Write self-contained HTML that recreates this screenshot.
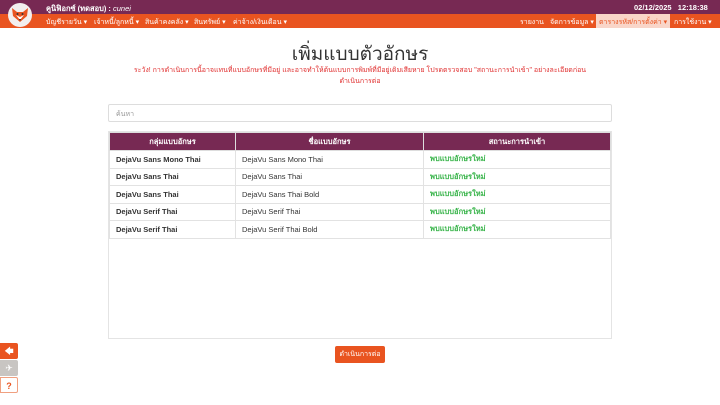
<!DOCTYPE html>
<html><head><meta charset="utf-8"><style>
*{box-sizing:border-box;margin:0;padding:0}
body{width:720px;height:405px;background:#fff;font-family:"Liberation Sans","Noto Sans CJK SC",sans-serif;position:relative;overflow:hidden;color:#333}
.top{position:absolute;left:0;top:0;width:720px;height:14px;background:#772953;color:#fff;font-size:7.5px}
.nav{position:absolute;left:0;top:14px;width:720px;height:14px;background:#e95420;color:#fff;font-size:7px}
.logo{position:absolute;left:8px;top:3px;width:24px;height:24px;border-radius:50%;background:#f2eeee;z-index:2;display:flex;align-items:center;justify-content:center}
.abs{position:absolute;white-space:nowrap}
h1{position:absolute;top:39px;left:0;width:720px;text-align:center;font-size:19px;font-weight:normal;color:#333}
.warn{position:absolute;top:65px;left:120px;width:480px;text-align:center;font-size:7px;color:#e03030;line-height:11px}
.search{position:absolute;left:108px;top:104px;width:504px;height:18px;border:1px solid #ddd;border-radius:2px;font-size:7px;color:#999;padding:4px 7px}
.box{position:absolute;left:108px;top:131px;width:504px;height:208px;border:1px solid #e4e4e4}
table{border-collapse:collapse;width:502px;font-size:7.5px}
th{background:#772953;color:#fff;height:18px;border:1px solid #ddd;font-weight:bold}
td{height:17.5px;border:1px solid #e2e2e2;padding-left:6px}
td.b{font-weight:bold}
td.g{color:#38b44a;font-weight:bold}
.btn{position:absolute;left:335px;top:346px;width:50px;height:17px;background:#e95420;border-radius:2px;color:#fff;font-size:7px;text-align:center;line-height:17px}
.sb{position:absolute;left:0;width:18px;height:16px;font-size:9px;text-align:center;line-height:16px;border-radius:0 2px 2px 0}
</style></head><body>
<div class="top">
<span class="abs" style="left:46px;top:3px;font-weight:bold">คูนิฟิอกซ์ (ทดสอบ) : <i style="font-weight:normal">cunei</i></span>
<span class="abs" style="left:634px;top:3px;font-weight:bold">02/12/2025 &nbsp;&nbsp;12:18:38</span>
</div>
<div class="nav">
<span class="abs" style="left:46px;top:3px">บัญชีรายวัน ▾</span>
<span class="abs" style="left:94px;top:3px">เจ้าหนี้/ลูกหนี้ ▾</span>
<span class="abs" style="left:145px;top:3px">สินค้าคงคลัง ▾</span>
<span class="abs" style="left:194px;top:3px">สินทรัพย์ ▾</span>
<span class="abs" style="left:233px;top:3px">ค่าจ้าง/เงินเดือน ▾</span>
<span class="abs" style="left:520px;top:3px">รายงาน</span>
<span class="abs" style="left:550px;top:3px">จัดการข้อมูล ▾</span>
<span class="abs" style="left:596px;top:0;height:14px;width:74px;background:#f9d5c8;color:#e95420;padding:3px 3px">ตารางรหัส/การตั้งค่า ▾</span>
<span class="abs" style="left:674px;top:3px">การใช้งาน ▾</span>
</div>
<div class="logo"><svg width="18" height="16" viewBox="0 0 18 16"><path d="M1 1 L6 5 L12 5 L17 1 L16 9 L9 15 L2 9Z" fill="#e95420"/><path d="M5 8 L9 13 L13 8 L9 10Z" fill="#fff"/><circle cx="6.5" cy="7" r="1" fill="#333"/><circle cx="11.5" cy="7" r="1" fill="#333"/><path d="M8 12 L10 12 L9 14Z" fill="#333"/></svg></div>
<h1>เพิ่มแบบตัวอักษร</h1>
<div class="warn">ระวัง! การดำเนินการนี้อาจแทนที่แบบอักษรที่มีอยู่ และอาจทำให้ต้นแบบการพิมพ์ที่มีอยู่เดิมเสียหาย โปรดตรวจสอบ "สถานะการนำเข้า" อย่างละเอียดก่อน<br>ดำเนินการต่อ</div>
<div class="search">ค้นหา</div>
<div class="box"><table>
<tr><th style="width:126px">กลุ่มแบบอักษร</th><th style="width:188px">ชื่อแบบอักษร</th><th>สถานะการนำเข้า</th></tr>
<tr><td class="b">DejaVu Sans Mono Thai</td><td>DejaVu Sans Mono Thai</td><td class="g">พบแบบอักษรใหม่</td></tr>
<tr><td class="b">DejaVu Sans Thai</td><td>DejaVu Sans Thai</td><td class="g">พบแบบอักษรใหม่</td></tr>
<tr><td class="b">DejaVu Sans Thai</td><td>DejaVu Sans Thai Bold</td><td class="g">พบแบบอักษรใหม่</td></tr>
<tr><td class="b">DejaVu Serif Thai</td><td>DejaVu Serif Thai</td><td class="g">พบแบบอักษรใหม่</td></tr>
<tr><td class="b">DejaVu Serif Thai</td><td>DejaVu Serif Thai Bold</td><td class="g">พบแบบอักษรใหม่</td></tr>
</table></div>
<div class="btn">ดำเนินการต่อ</div>
<div class="sb" style="top:343px;background:#e95420;color:#fff">🡄</div>
<div class="sb" style="top:360px;background:#c8c5c2;color:#fff">✈</div>
<div class="sb" style="top:377px;background:#fff;border:1px solid #f0a080;color:#e95420;font-weight:bold">?</div>
</body></html>
